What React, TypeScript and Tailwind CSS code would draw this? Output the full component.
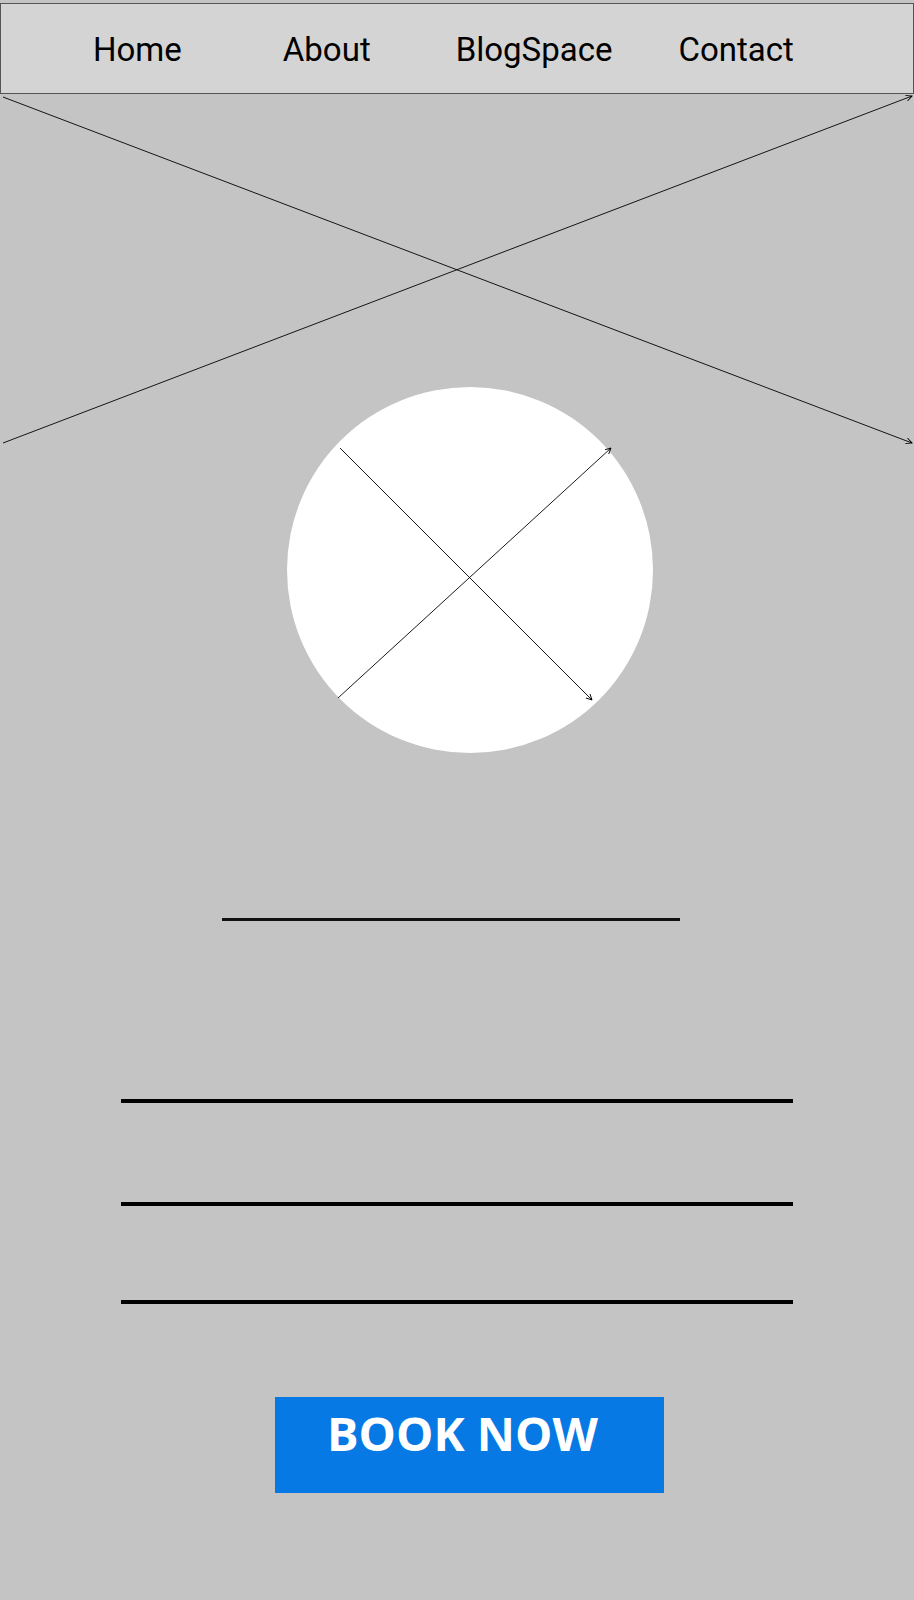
import React from "react";

function Arrowed({ x1, y1, x2, y2, id }: { x1: number; y1: number; x2: number; y2: number; id: string }) {
  return (
    <>
      <defs>
        <marker id={id} markerWidth="8" markerHeight="8" refX="6" refY="3" orient="auto" markerUnits="userSpaceOnUse">
          <path d="M0,0 L6,3 L0,6" fill="none" stroke="#000" strokeWidth="0.9" />
        </marker>
      </defs>
      <line x1={x1} y1={y1} x2={x2} y2={y2} stroke="#000" strokeWidth="0.9" markerEnd={`url(#${id})`} />
    </>
  );
}

export default function App() {
  return (
    <div className="min-h-[1600px] w-[914px] bg-[#c4c4c4] pt-[3px] overflow-hidden" style={{ fontFamily: "Roboto, 'Liberation Sans', sans-serif" }}>
      <header className="h-[91px] border border-[#555] bg-[#d4d4d4] flex items-start pt-[29px] text-[33px] leading-[33px] text-black" style={{ fontFamily: "Roboto, sans-serif" }}>
        <span className="ml-[92px]">Home</span>
        <span className="ml-[101px]">About</span>
        <span className="ml-[85px]">BlogSpace</span>
        <span className="ml-[66px]">Contact</span>
      </header>

      <div className="h-[351px] w-full">
        <svg width="914" height="351" viewBox="0 0 914 351" className="block">
          <Arrowed id="a1" x1={3} y1={3} x2={912} y2={349} />
          <Arrowed id="a2" x1={3} y1={349} x2={912} y2={2} />
        </svg>
      </div>

      <div className="relative -mt-[58px] ml-[287px] h-[366px] w-[366px] rounded-full bg-white">
        <svg width="366" height="366" viewBox="0 0 366 366" className="absolute inset-0">
          <Arrowed id="c1" x1={53} y1={61} x2={305} y2={313} />
          <Arrowed id="c2" x1={51} y1={311} x2={324} y2={61} />
        </svg>
      </div>

      <div className="mt-[165px] ml-[222px] h-[3px] w-[458px] bg-[#111]" />

      <div className="mt-[178px] ml-[121px] h-[4px] w-[672px] bg-black" />
      <div className="mt-[99px] ml-[121px] h-[4px] w-[672px] bg-black" />
      <div className="mt-[94px] ml-[121px] h-[4px] w-[672px] bg-black" />

      <div className="mt-[93px] ml-[275px] h-[96px] w-[389px] bg-[#0779e4] pt-[13px] pl-[52px]">
        <span className="block text-[47px] leading-[47px] font-bold text-white" style={{ fontFamily: "'Open Sans', sans-serif" }}>
          BOOK NOW
        </span>
      </div>
    </div>
  );
}
